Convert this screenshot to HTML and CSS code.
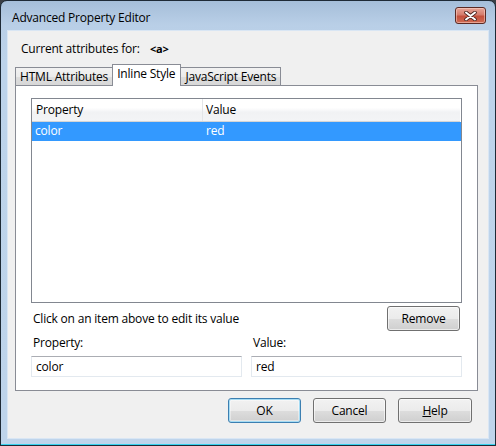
FILE: index.html
```html
<!DOCTYPE html>
<html lang="en">

<head>
  <meta charset="UTF-8" />
  <title>Advanced Property Editor</title>
  <link rel="stylesheet" href="styles.css">
</head>

<body>

  <div class="window">
    <div class="titlebar">
      <span class="title">Advanced Property Editor</span>
      <button class="closeBtn" type="button" aria-label="Close">
        <svg width="13" height="10" viewBox="0 0 13 10">
          <path d="M2 1.5 L11 8.5 M11 1.5 L2 8.5" stroke="#4a2520" stroke-width="3.6" stroke-linecap="round" />
          <path d="M2 1.5 L11 8.5 M11 1.5 L2 8.5" stroke="#fff" stroke-width="2" stroke-linecap="round" />
        </svg>
      </button>
    </div>

    <div class="client">
      <div class="current">
        <span class="currentLabel">Current attributes for:</span>
        <span class="tagName">&lt;a&gt;</span>
      </div>

      <div class="tabs">
        <div class="tab">HTML Attributes</div>
        <div class="tab selected">Inline Style</div>
        <div class="tab">JavaScript Events</div>
      </div>

      <div class="panel">
        <div class="listView">
          <div class="listHeader">
            <div class="col colProp">Property</div>
            <div class="col colVal">Value</div>
          </div>
          <div class="listRow selected">
            <div class="col colProp">color</div>
            <div class="col colVal">red</div>
          </div>
        </div>

        <div class="hintRow">
          <span>Click on an item above to edit its value</span>
          <button class="btn" type="button">Remove</button>
        </div>

        <div class="fields">
          <div class="field">
            <label for="propName">Property:</label>
            <input type="text" id="propName" value="color" />
          </div>
          <div class="field">
            <label for="propValue">Value:</label>
            <input type="text" id="propValue" value="red" />
          </div>
        </div>
      </div>

      <div class="buttons">
        <button class="btn default" type="button">OK</button>
        <button class="btn" type="button">Cancel</button>
        <button class="btn help" type="button"><u>H</u>elp</button>
      </div>
    </div>
  </div>

</body>

</html>
```

FILE: styles.css
```css
* {
  margin: 0;
  padding: 0;
  box-sizing: border-box;
  font-family: "Segoe UI", "Open Sans", sans-serif;
  letter-spacing: -0.2px;
}

body {
  background-color: #3a3f45;
  width: 496px;
  height: 446px;
  overflow: hidden;
  font-size: 12px;
  color: #000;
}

.window {
  width: 496px;
  height: 446px;
  display: flex;
  flex-direction: column;
  border: 1px solid #1e2a36;
  border-radius: 7px 7px 0 0;
  background: linear-gradient(to bottom, #a5bed9 0, #b9cfe7 24px, #bdd3ea 60px, #bed4eb 100%);
  box-shadow: inset 0 -1px 0 #37d2ee;
  padding: 0 6px 6px 6px;
}

.titlebar {
  height: 29px;
  display: flex;
  align-items: center;
  padding: 3px 0 0 5px;
}

.title {
  font-size: 12px;
  color: #000;
}

.closeBtn {
  margin-left: auto;
  margin-right: 3px;
  margin-top: -3px;
  width: 31px;
  height: 17px;
  border: 1px solid #5b2a24;
  border-radius: 3px;
  background: linear-gradient(to bottom, #e7a597 0, #d57c6c 45%, #c4503c 55%, #cf6c55 100%);
  box-shadow: inset 0 0 0 1px rgba(255, 220, 210, 0.5);
  display: flex;
  align-items: center;
  justify-content: center;
}

.client {
  flex: 1;
  display: flex;
  flex-direction: column;
  background-color: #f0f0f0;
  border: 1px solid #d9e6f4;
}

.current {
  display: flex;
  align-items: center;
  height: 16px;
  margin: 9px 0 0 13px;
}

.currentLabel {
  width: 129px;
}

.tagName {
  font-size: 11px;
  font-weight: bold;
}

.tabs {
  display: flex;
  align-items: flex-end;
  height: 22px;
  margin: 8px 0 -1px 7px;
}

.tab {
  height: 19px;
  padding: 0 4px 0 4px;
  line-height: 17px;
  border: 1px solid #898c95;
  border-bottom: none;
  background: linear-gradient(to bottom, #f2f2f2, #ebebeb 50%, #dedede 51%, #d6d6d6);
  white-space: nowrap;
}

.tab + .tab {
  margin-left: -1px;
}

.tab.selected {
  position: relative;
  z-index: 1;
  height: 22px;
  line-height: 18px;
  background: #fff;
  padding: 0 5px 0 4px;
}

.panel {
  margin: 0 10px 0 7px;
  height: 306px;
  background-color: #fff;
  border: 1px solid #898c95;
  padding: 12px 15px 0 15px;
}

.listView {
  height: 205px;
  border: 1px solid #828790;
}

.listHeader {
  display: flex;
  height: 23px;
  margin-right: 1px;
  background: linear-gradient(to bottom, #fff 0, #fff 40%, #f1f2f4 60%, #f3f4f6 100%);
  border-bottom: 1px solid #d5d5d5;
  line-height: 22px;
}

.listHeader .colProp {
  border-right: 1px solid #e3e5e8;
}

.col {
  padding-left: 4px;
}

.colProp {
  width: 171px;
}

.colVal {
  flex: 1;
  padding-left: 3px;
}

.listRow {
  display: flex;
  height: 19px;
  line-height: 18px;
}

.listRow .colProp {
  padding-left: 3px;
}

.listRow.selected {
  background-color: #3399ff;
  color: #fff;
}

.hintRow {
  display: flex;
  align-items: center;
  justify-content: space-between;
  margin-top: 3px;
  padding: 0 2px 0 2px;
}

.btn {
  width: 73px;
  height: 25px;
  border: 1px solid #707070;
  border-radius: 3px;
  background: linear-gradient(to bottom, #f2f2f2 0, #ebebeb 50%, #dddddd 51%, #cfcfcf 100%);
  box-shadow: inset 0 0 0 1px rgba(255, 255, 255, 0.6);
  font-size: 12px;
  color: #000;
}

.btn.help {
  width: 74px;
}

.btn.default {
  border-color: #3c7fb1;
  box-shadow: inset 0 0 0 1px #a6dcf4, inset 0 0 0 2px rgba(255, 255, 255, 0.4);
}

.fields {
  display: flex;
  gap: 9px;
  margin-top: 4px;
}

.field {
  flex: 1;
  display: flex;
  flex-direction: column;
}

.field label {
  padding-left: 2px;
  height: 21px;
  line-height: 16px;
}

.field input {
  height: 21px;
  border: 1px solid #e3e9ef;
  border-top-color: #abadb3;
  padding: 0 4px;
  font-size: 12px;
  outline: none;
}

.buttons {
  display: flex;
  justify-content: flex-end;
  gap: 12px;
  margin: 7px 16px 0 0;
}
```
